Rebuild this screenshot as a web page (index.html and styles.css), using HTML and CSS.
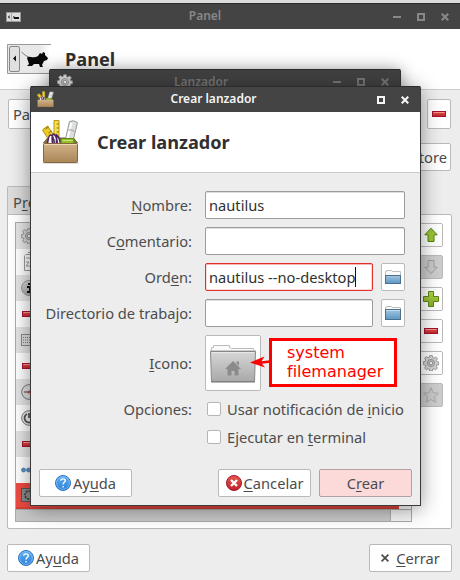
FILE: index.html
```
<!DOCTYPE html>
<html lang="es">
<head>
<meta charset="utf-8">
<title>Panel</title>
<link rel="stylesheet" href="styles.css">
</head>
<body>
<svg class="defs" width="0" height="0">
  <defs>
    <linearGradient id="gRed" x1="0" y1="0" x2="0" y2="1"><stop offset="0" stop-color="#e8574a"/><stop offset="1" stop-color="#c0202c"/></linearGradient>
    <linearGradient id="gBlue" x1="0" y1="0" x2="0" y2="1"><stop offset="0" stop-color="#5fb0f0"/><stop offset="1" stop-color="#2b7fdc"/></linearGradient>
    <linearGradient id="gFolder" x1="0" y1="0" x2="0" y2="1"><stop offset="0" stop-color="#a4c6df"/><stop offset="1" stop-color="#5a97c4"/></linearGradient>
    <linearGradient id="gGray" x1="0" y1="0" x2="0" y2="1"><stop offset="0" stop-color="#d6d6d6"/><stop offset="1" stop-color="#a9a9a9"/></linearGradient>
    <linearGradient id="gBox" x1="0" y1="0" x2="0" y2="1"><stop offset="0" stop-color="#d0b288"/><stop offset="1" stop-color="#ab8656"/></linearGradient>
    <linearGradient id="gGreen" x1="0" y1="0" x2="0" y2="1"><stop offset="0" stop-color="#b4d84c"/><stop offset="1" stop-color="#82ad27"/></linearGradient>
    <symbol id="minus" viewBox="0 0 16 16"><rect x="1.500" y="5.500" width="13" height="5" fill="url(#gRed)" stroke="#a3122f"/><path d="M2.500 6.500h11" stroke="#f3968a"/></symbol>
    <symbol id="gear" viewBox="0 0 16 16"><path d="M6.700.7h2.600l.4 2 1.200.5 1.700-1.200 1.800 1.800-1.200 1.700.5 1.200 2 .4v2.600l-2 .4-.5 1.200 1.200 1.700-1.800 1.800-1.700-1.200-1.200.5-.4 2H6.700l-.4-2-1.200-.5-1.700 1.200-1.800-1.800 1.200-1.700-.5-1.200-2-.4V6.700l2-.4.5-1.200-1.200-1.700 1.800-1.800 1.700 1.200 1.200-.5z" fill="#d4d4d4" stroke="#8c8c8c" stroke-width=".9"/><circle cx="8" cy="8" r="3.600" fill="#bdbdbd" stroke="#999"/><circle cx="8" cy="8" r="1.700" fill="#f4f4f4" stroke="#888" stroke-width=".8"/></symbol>
    <symbol id="help" viewBox="0 0 16 16"><circle cx="8" cy="8" r="7.500" fill="url(#gBlue)" stroke="#2f74bb"/><circle cx="8" cy="8" r="6.400" fill="none" stroke="#8cc6f5" stroke-width=".7"/><path d="M5.600 5.700c.3-2.500 4.700-2.400 4.700 0 0 1.600-2.200 1.700-2.200 3.700M8.100 11v1.600" fill="none" stroke="#fff" stroke-width="1.400"/></symbol>
    <symbol id="folder" viewBox="0 0 16 14"><path d="M.5 13V1.500h1v-1h5l1 1h8V13" fill="#fafafa" stroke="#bdbdbd"/><rect x=".5" y="3.500" width="15" height="10" fill="url(#gFolder)" stroke="#49718f"/><path d="M1 4.500h14" stroke="#c3dbea"/></symbol>
    <symbol id="toolbox" viewBox="0 0 36 46">
      <rect x="0" y="43" width="36" height="2" fill="#000" opacity=".12"/>
      <path d="M1 24l4-5h26l4 5z" fill="#8d6f49" stroke="#7b603e"/>
      <path d="M11.500 1.500h5V22h-5z" fill="#f6e04f" stroke="#b99711"/><path d="M14 5h2.500M14 9h2.500M14 13h2.500" stroke="#9c7d08"/>
      <path d="M0 11l5-4 7 10-5 5z" fill="#f0cb25" stroke="#b08b0a"/><path d="M3 10l3-2M6 14l3-2" stroke="#8c6d0b"/>
      <path d="M27 2.500q4-2 8 1L31 20h-8z" fill="#dcdfdd" stroke="#969a98"/><path d="M29 4l-4 15" stroke="#fff" stroke-width="2"/><path d="M26 11q4-1 6 2" stroke="#999" fill="none"/>
      <path d="M5 25q1-9 3-9 3 0 4 9M10 25q-1-9 1-10 3 1 4 10M14 25q0-8 0-9 3 2 4 9" fill="#fff" stroke="#4f2461" stroke-width="1.600"/>
      <rect x="18.500" y="19.500" width="13" height="6" rx="1" fill="#91c127" stroke="#5b8810"/><path d="M20 21.500h10" stroke="#c9e27c"/>
      <rect x="1" y="24.500" width="34" height="19" rx="1" fill="url(#gBox)" stroke="#866540"/><path d="M2 25.500h32" stroke="#ecd8b4"/>
    </symbol>
    <symbol id="wmin" viewBox="0 0 8 8"><path d="M0 4h8" stroke="currentColor" stroke-width="2"/></symbol>
    <symbol id="wmax" viewBox="0 0 8 8"><rect x="1" y="1" width="6" height="6" fill="none" stroke="currentColor" stroke-width="2"/></symbol>
    <symbol id="wclose" viewBox="0 0 8 8"><path d="M.7.7l6.600 6.600M7.300.7L.7 7.300" stroke="currentColor" stroke-width="2.100"/></symbol>
    <symbol id="arrow" viewBox="0 0 16 16"><path d="M8 1.200l6.200 6.600h-3.200v6.700H5V7.800H1.800z" fill="var(--fill)" stroke="var(--line)"/></symbol>
  </defs>
</svg>

<main class="desktop">
  <section class="window panel-window">
    <header class="titlebar">
      <svg class="title-icon" width="15" height="10" viewBox="0 0 15 10"><rect x=".5" y=".5" width="14" height="9" fill="#ddd" stroke="#999"/><path d="M5.500 1v8" stroke="#aaa"/><path d="M3.500 3v4L2 5zM7 4l2 1h4v2H8z" fill="#111"/></svg>
      <span>Panel</span>
      <div class="controls"><svg><use href="#wmin"/></svg><svg><use href="#wmax"/></svg><svg><use href="#wclose"/></svg></div>
    </header>
    <div class="heading panel-heading">
      <svg width="44" height="30" viewBox="0 0 44 30"><defs><linearGradient id="fade"><stop offset=".75" stop-color="#e8e8e8"/><stop offset="1" stop-color="#fff"/></linearGradient></defs><rect x=".5" y=".5" width="43" height="29" fill="url(#fade)"/><path d="M44 .5H.5v29H43" fill="none" stroke="#999"/><rect x="2.500" y="2.500" width="10" height="25" rx="1.500" fill="#e0e0e0" stroke="#888"/><path d="M9 11.500v6L6 14.500z" fill="#111"/><path d="M14.500 8q4 4 7 5" fill="none" stroke="#777"/><path d="M20 14q1-2 4-1 4 1 7-1l2-3 2 1 1-2 2 1 0 2 3 3-1 2-3 1-2 4 1 2h-3l-1-3-5 0-2 2h-5l2-2z" fill="#080808"/></svg>
      <h1>Panel</h1>
    </div>
    <div class="panel-body">
      <div class="select-row"><div class="button combo">Panel 1</div><div class="button square"><svg width="16" height="16"><use href="#minus"/></svg></div></div>
      <div class="backup-row"><div class="button">Backup and restore</div></div>
      <div class="tab">P<u>r</u>eferencias</div>
      <div class="notebook">
        <div class="list">
          <div class="row"><svg width="16" height="16"><use href="#gear"/></svg></div>
          <div class="row"><svg width="16" height="20" viewBox="0 0 16 20"><path d="M4.500 2.500h10v16h-11v-15M7 .5h6M5 6h9M5 10h3l-3 4h4" fill="none" stroke="#999"/></svg></div>
          <div class="row"><svg width="16" height="16" viewBox="0 0 16 16"><circle cx="8" cy="8" r="7.500" fill="url(#gGray)" stroke="#999"/><path d="M6 7h3v5M6 12h5M8 3v2" fill="none" stroke="#111" stroke-width="2"/></svg></div>
          <div class="row"><svg width="16" height="16"><use href="#minus"/></svg></div>
          <div class="row"><svg width="16" height="16" viewBox="0 0 16 16"><rect x=".5" y="2.500" width="15" height="11" fill="#ddd" stroke="#888"/><path d="M2 5.500h12M2 8h12M2 10.500h12" stroke="#777" stroke-dasharray="1 1"/></svg></div>
          <div class="row"><svg width="16" height="16"><use href="#minus"/></svg></div>
          <div class="row"><svg width="16" height="16" viewBox="0 0 16 16"><circle cx="8" cy="8" r="7.300" fill="#ddd" stroke="#777"/><path d="M3 8h5" stroke="#444"/><path d="M7 9l2-2" stroke="#d33" stroke-width="2"/></svg></div>
          <div class="row"><svg width="16" height="16" viewBox="0 0 16 16"><circle cx="8" cy="8" r="7.300" fill="#eee" stroke="#777"/><path d="M6 4a4.500 4.500 0 1 0 4 0M8 3v5" fill="none" stroke="#555" stroke-width="1.800"/></svg></div>
          <div class="row"><svg width="16" height="16"><use href="#minus"/></svg></div>
          <div class="row"><svg width="16" height="16" viewBox="0 0 16 16"><g fill="#5b93c4" stroke="#3c76a8" stroke-width=".7"><circle cx="2.500" cy="8" r="2"/><circle cx="7.500" cy="8" r="2"/><circle cx="12.500" cy="8" r="2"/></g></svg></div>
          <div class="row selected"><svg width="16" height="16" viewBox="0 0 16 16"><rect x=".5" y="1.500" width="15" height="13" fill="#8a8a8a" stroke="#555"/><circle cx="8" cy="8" r="4" fill="none" stroke="#444" stroke-width="2" stroke-dasharray="2 1"/></svg></div>
          <div class="scrollbar"><div class="thumb"></div></div>
        </div>
        <div class="tools">
          <div class="button tool"><svg class="up" width="16" height="16"><use href="#arrow"/></svg></div>
          <div class="button tool disabled"><svg class="down" width="16" height="16"><use href="#arrow"/></svg></div>
          <div class="button tool"><svg width="16" height="16" viewBox="0 0 16 16"><path d="M5.500.5h5v5h5v5h-5v5h-5v-5h-5v-5h5z" fill="url(#gGreen)" stroke="#5c8414"/></svg></div>
          <div class="button tool"><svg width="16" height="16"><use href="#minus"/></svg></div>
          <div class="button tool"><svg width="16" height="16"><use href="#gear"/></svg></div>
          <div class="button tool disabled"><svg width="16" height="16" viewBox="0 0 16 16"><path d="M8 .8l2.200 4.900 5.200.6-3.900 3.600 1.100 5.300L8 12.500l-4.600 2.700 1.100-5.300L.6 6.300l5.200-.6z" fill="#c9c9c9" stroke="#a9a9a9"/></svg></div>
        </div>
      </div>
      <div class="panel-actions">
        <div class="button help-button"><svg width="16" height="16"><use href="#help"/></svg><span>Ay<u>u</u>da</span></div>
        <div class="button close-button"><svg width="8" height="8" viewBox="0 0 8 8"><path d="M.6.6l6.800 6.800M7.400.6L.6 7.400" stroke="#4a4a4a" stroke-width="1.700"/></svg><span><u>C</u>errar</span></div>
      </div>
    </div>
  </section>

  <section class="window launcher-window">
    <header class="titlebar">
      <svg class="title-icon" width="16" height="16"><use href="#gear"/></svg>
      <span>Lanzador</span>
      <div class="controls"><svg><use href="#wmin"/></svg><svg><use href="#wmax"/></svg><svg><use href="#wclose"/></svg></div>
    </header>
  </section>

  <section class="window dialog">
    <header class="titlebar active">
      <svg class="title-icon" width="17" height="17" viewBox="0 0 36 46" preserveAspectRatio="none"><use href="#toolbox" width="36" height="46"/></svg>
      <span>Crear lanzador</span>
      <div class="controls"><svg><use href="#wmax"/></svg><svg><use href="#wclose"/></svg></div>
    </header>
    <div class="heading dialog-heading">
      <svg width="37" height="46"><use href="#toolbox"/></svg>
      <h1>Crear lanzador</h1>
    </div>
    <form class="form">
      <label><u>N</u>ombre:</label><div class="fields"><div class="input">nautilus</div></div>
      <label>C<u>o</u>mentario:</label><div class="fields"><div class="input"></div></div>
      <label>Ord<u>e</u>n:</label><div class="fields"><div class="input error">nautilus --no-desktop<i class="caret"></i></div><div class="button browse"><svg width="16" height="14" viewBox="0 0 16 14"><path d="M.5 13V1.500h1v-1h5l1 1h8V13" fill="#fafafa" stroke="#bdbdbd"/><rect x=".5" y="5.500" width="15" height="8" fill="url(#gFolder)" stroke="#49718f"/></svg></div></div>
      <label>Directorio de trabajo:</label><div class="fields"><div class="input"></div><div class="button browse"><svg width="16" height="14"><use href="#folder"/></svg></div></div>
      <label><u>I</u>cono:</label>
      <div class="button icon-button"><svg width="46" height="39" viewBox="0 0 46 39"><path d="M1.500 8V3.500h2v-2h16v2l2 1h22V8" fill="#fbfbfb" stroke="#bbb"/><rect x=".5" y="6.500" width="45" height="3" fill="#fff" stroke="#ccc"/><path d="M.5 7.500h45l-1 30h-43z" fill="url(#gGray)" stroke="#888"/><path d="M1.500 8.500h43" stroke="#e8e8e8"/><path d="M1 38h44" stroke="#777"/><path d="M23 17l8 8h-2.500v6.500h-4V27h-3v4.500h-4V25H15zM26.500 17.500h2.500v4l-2.500-2z" fill="#8b8b8b"/></svg></div>
      <label>Opciones:</label>
      <div class="options">
        <div class="option"><i class="check"></i><span>Usar notificación de <u>i</u>nicio</span></div>
        <div class="option"><i class="check"></i><span>Ejecutar en <u>t</u>erminal</span></div>
      </div>
    </form>
    <div class="dialog-actions">
      <div class="button action help"><svg width="16" height="16"><use href="#help"/></svg><span>Ay<u>u</u>da</span></div>
      <div class="button action"><svg width="16" height="16" viewBox="0 0 16 16"><circle cx="8" cy="8" r="7.500" fill="url(#gRed)" stroke="#a2152c"/><path d="M5 5l6 6M11 5l-6 6" stroke="#fff" stroke-width="2.400"/></svg><span><u>C</u>ancelar</span></div>
      <div class="button action primary"><span>C<u>r</u>ear</span></div>
    </div>
  </section>

  <div class="note">system<br>filemanager</div>
  <svg class="note-arrow" width="20" height="12" viewBox="0 0 20 12"><path d="M0 6.500L14.500.5 11.500 5.200 20 4.200v2.600l-8 .9 3 3.800z" fill="#f00"/></svg>
</main>
</body>
</html>
```
FILE: styles.css
```
* { box-sizing: border-box; }

body {
  margin: 0;
  font: 14.67px/20px "Noto Sans", "Open Sans", sans-serif;
  color: #4c4c4c;
}

u { text-decoration: underline; text-decoration-thickness: 1px; text-underline-offset: 2px; text-decoration-skip-ink: none; }
svg { display: block; flex: none; }
.defs { position: absolute; }

.desktop {
  position: relative;
  width: 460px;
  height: 580px;
  overflow: hidden;
  background: #dcdcdc;
}

.window { position: absolute; background: #ededed; }
.panel-window { left: 0; top: 3px; width: 460px; height: 577px; }
.launcher-window {
  left: 49px; top: 69px; width: 352px; height: 420px;
  border: 1px solid #333; border-top: 0;
  border-radius: 2px 2px 0 0;
  box-shadow: 0 0 16px rgba(0, 0, 0, .4);
}
.dialog {
  left: 30px; top: 86px; width: 391px; height: 420px;
  border: 1px solid #3a3a3a; border-top: 0;
  border-radius: 2px 2px 0 0;
  box-shadow: 0 3px 20px rgba(0, 0, 0, .42);
}

.titlebar {
  height: 26px;
  display: grid;
  grid-template-columns: 60px 1fr 110px;
  align-items: center;
  text-align: center;
  background: #444;
  border-top: 1px solid #2c2c2c;
  color: #888;
  font-size: 12px;
  line-height: 18px;
  font-weight: 600;
}
.titlebar span { padding-bottom: 1px; }
.titlebar.active { color: #f5f5f5; grid-template-columns: 60px 1fr 84px; }
.title-icon { margin-left: 6px; }
.launcher-window .title-icon { margin-left: 7px; }
.launcher-window .titlebar { background: #404040; color: #747474; grid-template-columns: 60px 1fr 108px; }
.launcher-window .controls, .launcher-window .title-icon { margin-top: -1px; }
.controls { display: flex; justify-content: flex-end; gap: 16px; padding-right: 11px; }
.controls svg { width: 8px; height: 8px; }

.heading {
  height: 61px;
  display: flex;
  align-items: center;
  background: #fff;
  border-bottom: 1px solid #ccc;
}
.heading h1 { margin: 0; font-size: 18.150px; line-height: 24px; font-weight: 700; color: #303030; }
.panel-heading { gap: 14px; padding-left: 7px; }
.dialog-heading { gap: 18px; padding-left: 11px; }

.button {
  display: flex;
  align-items: center;
  justify-content: center;
  background: #fff;
  border: 1px solid #bababa;
  border-radius: 2px;
  white-space: nowrap;
}

.panel-body { padding: 9px 8px 0 7px; }
.select-row { display: flex; justify-content: space-between; height: 30px; padding: 0 1px; }
.combo { width: 360px; justify-content: flex-start; padding-left: 4px; }
.square { width: 24px; }
.backup-row { display: flex; justify-content: flex-end; margin-top: 14px; padding-right: 1px; }
.backup-row .button { height: 28px; padding: 0 3px; }
.tab {
  width: 110px; height: 29px; margin-top: 15px; padding: 5px 5px 0;
  background: #dcdcdc;
  border: 1px solid #bababa; border-bottom: 0;
  border-radius: 2px 2px 0 0;
}
.notebook {
  display: flex;
  justify-content: space-between;
  height: 315px;
  margin-top: -1px;
  padding: 7px 8px 6px 7px;
  background: #fff;
  border: 1px solid #bababa;
  border-radius: 0 2px 2px 2px;
}
.list { width: 397px; height: 300px; border: 1px solid #aaa; }
.row { display: flex; align-items: center; height: 26px; padding-left: 5px; }
.row:nth-child(odd) { background: #e4e4e4; }
.row.selected { background: #ee4b44; margin-right: 12px; border-bottom: 2px solid #d84138; }
.scrollbar { height: 12px; background: #f3f3f3; border-top: 1px solid #aaa; }
.thumb { width: 375px; height: 11px; background: #c8c8c8; border-right: 1px solid #aaa; }
.tools { display: flex; flex-direction: column; gap: 8px; padding-top: 1px; }
.tool { width: 24px; height: 24px; }
.disabled { background: #cdcdcd; }
.up { --fill: #99c536; --line: #55800f; }
.down { --fill: #c8c8c8; --line: #a0a0a0; transform: rotate(180deg); }
.panel-actions { display: flex; justify-content: space-between; margin-top: 15px; }
.panel-actions .button { width: 83px; height: 28px; }
.help-button { gap: 2px; }
.close-button { gap: 7px; }

.form {
  display: grid;
  grid-template-columns: 161px 200px;
  grid-template-rows: repeat(4, 28px) 56px 52px;
  gap: 8px 13px;
  align-items: center;
  padding-top: 18px;
}
.form label { text-align: right; white-space: nowrap; }
.form label:nth-last-of-type(1) { align-self: start; }
.fields { display: flex; gap: 8px; height: 28px; }
.input {
  flex: 1;
  display: flex;
  align-items: center;
  padding-left: 3px;
  background: #fff;
  border: 1px solid #9c9c9c;
  border-radius: 2px;
  box-shadow: inset 0 1px #dedede;
  color: #303030;
  white-space: nowrap;
}
.input.error { border-color: #e0302c; box-shadow: inset 0 1px #f4b4b2, inset 0 0 0 1px #fbdcdb; }
.caret { width: 1px; height: 20px; background: #111; }
.browse { width: 24px; }
.icon-button { width: 56px; height: 56px; }
.options { display: flex; flex-direction: column; gap: 8px; align-self: start; padding-left: 2px; }
.option { display: flex; align-items: center; gap: 6px; height: 20px; white-space: nowrap; }
.check { flex: none; width: 14px; height: 14px; background: #fff; border: 1px solid #b5b5b5; border-radius: 2px; }

.dialog-actions { display: flex; gap: 8px; padding: 18px 8px 0; }
.action { width: 93px; height: 28px; gap: 2px; }
.action.help { margin-right: auto; }
.primary { background: #fcdada; border-color: #b3a0a0; }

.note {
  position: absolute;
  left: 269px; top: 338px; width: 128px; height: 49px;
  padding: 2px 0 0 15px;
  background: #fff;
  border: 3px solid #f00;
  color: #f00;
  font: 16px/19px "DejaVu Sans", sans-serif;
}
.note-arrow { position: absolute; left: 250px; top: 356px; }
```
